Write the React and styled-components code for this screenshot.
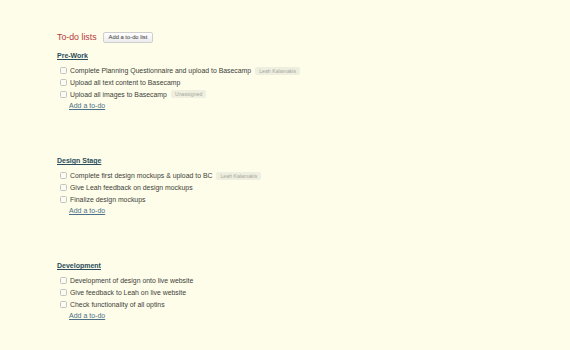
import styled, { createGlobalStyle } from "styled-components";

const Global = createGlobalStyle`
    html, body {
        margin: 0;
        background: #fdfde9;
    }
    body {
        font-family: "Liberation Sans", Arial, sans-serif;
        -webkit-font-smoothing: antialiased;
    }
`

const Page = styled.div`
    width: 570px;
    height: 350px;
    box-sizing: border-box;
    padding: 31px 0 0 57px;
    background: #fdfde9;
`

const TitleRow = styled.div`
    display: flex;
    align-items: center;
    gap: 6px;
    height: 12px;
    margin-bottom: 8px;
`

const Title = styled.h1`
    margin: 0;
    font-size: 8.8px;
    font-weight: normal;
    color: #b53a3c;
`

const AddListButton = styled.button`
    height: 11px;
    padding: 0 5px;
    font-family: inherit;
    font-size: 5.8px;
    color: #333;
    background: linear-gradient(#ffffff, #ececec);
    border: 1px solid #cfcfcf;
    border-radius: 2px;
    line-height: 9px;
`

const Section = styled.section`
    margin-bottom: 44px;
`

const ListName = styled.a`
    display: block;
    height: 10px;
    line-height: 10px;
    margin-bottom: 4px;
    font-size: 7px;
    font-weight: bold;
    color: #2b4c5c;
    text-decoration: underline;
`

const Items = styled.ul`
    list-style: none;
    margin: 0;
    padding: 0 0 0 3px;
`

const Item = styled.li`
    display: flex;
    align-items: center;
    height: 11.7px;
    font-size: 6.9px;
    color: #3d3d3a;
`

const Check = styled.span`
    width: 5px;
    height: 5px;
    margin-right: 3px;
    border: 1px solid #c4c4bc;
    border-radius: 1.5px;
    background: #fbfbf6;
`

const Tag = styled.span`
    margin-left: 4px;
    padding: 0 4px;
    height: 8px;
    line-height: 8px;
    font-size: 5.2px;
    color: #a8a89e;
    background: #efefdf;
    border-radius: 2px;
`

const AddTodo = styled.a`
    display: block;
    margin-left: 12px;
    height: 12px;
    line-height: 12px;
    font-size: 7px;
    color: #4c7087;
    text-decoration: underline;
`

const lists = [
    {
        name: "Pre-Work",
        items: [
            { text: "Complete Planning Questionnaire and upload to Basecamp", tag: "Leah Kalamakis" },
            { text: "Upload all text content to Basecamp" },
            { text: "Upload all images to Basecamp", tag: "Unassigned" },
        ],
    },
    {
        name: "Design Stage",
        items: [
            { text: "Complete first design mockups & upload to BC", tag: "Leah Kalamakis" },
            { text: "Give Leah feedback on design mockups" },
            { text: "Finalize design mockups" },
        ],
    },
    {
        name: "Development",
        items: [
            { text: "Development of design onto live website" },
            { text: "Give feedback to Leah on live website" },
            { text: "Check functionality of all optins" },
        ],
    },
]

const App = () => {

    return(
        <Page>
            <Global/>
            <TitleRow>
                <Title>To-do lists</Title>
                <AddListButton>Add a to-do list</AddListButton>
            </TitleRow>
            {lists.map(list => (
                <Section key={list.name}>
                    <ListName>{list.name}</ListName>
                    <Items>
                        {list.items.map(item => (
                            <Item key={item.text}>
                                <Check/>
                                {item.text}
                                {item.tag && <Tag>{item.tag}</Tag>}
                            </Item>
                        ))}
                    </Items>
                    <AddTodo>Add a to-do</AddTodo>
                </Section>
            ))}
        </Page>
    )
}

export default App
